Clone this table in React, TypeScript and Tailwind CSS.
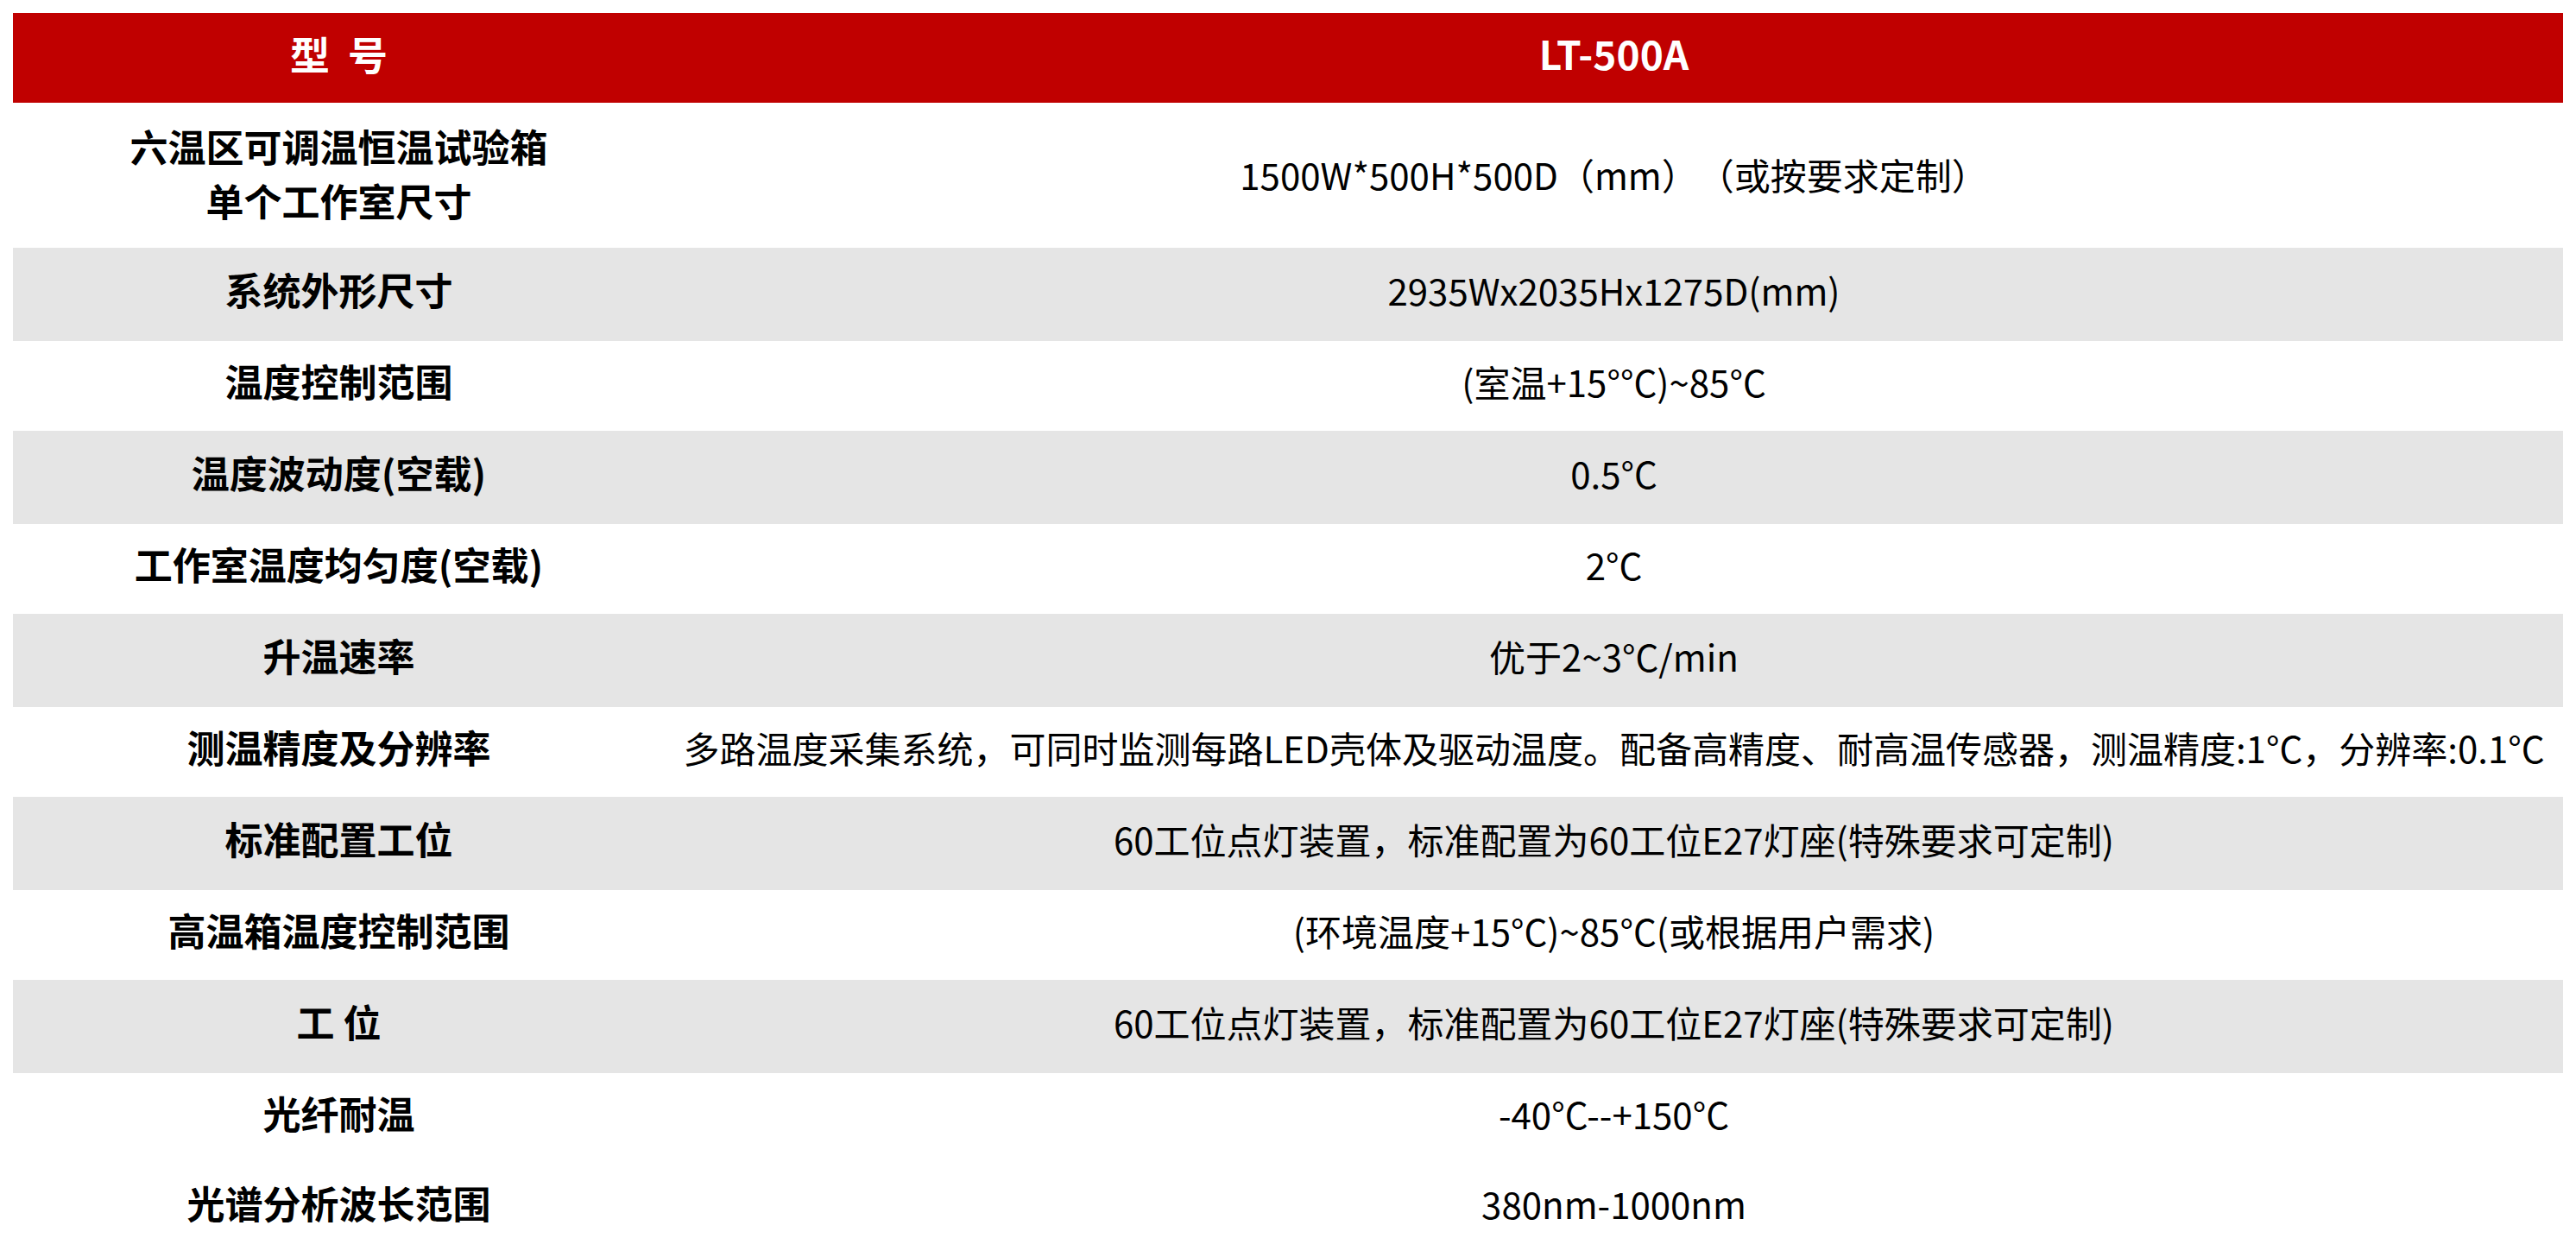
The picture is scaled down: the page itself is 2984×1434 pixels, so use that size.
import React from 'react';

type Row = {
    label: string[];
    value: string;
    grey: boolean;
};

const rows: Row[] = [
    { label: ['六温区可调温恒温试验箱', '单个工作室尺寸'], value: '1500W*500H*500D（mm）（或按要求定制）', grey: false },
    { label: ['系统外形尺寸'], value: '2935Wx2035Hx1275D(mm)', grey: true },
    { label: ['温度控制范围'], value: '(室温+15°°C)~85°C', grey: false },
    { label: ['温度波动度(空载)'], value: '0.5°C', grey: true },
    { label: ['工作室温度均匀度(空载)'], value: '2°C', grey: false },
    { label: ['升温速率'], value: '优于2~3°C/min', grey: true },
    { label: ['测温精度及分辨率'], value: '多路温度采集系统，可同时监测每路LED壳体及驱动温度。配备高精度、耐高温传感器，测温精度:1°C，分辨率:0.1°C', grey: false },
    { label: ['标准配置工位'], value: '60工位点灯装置，标准配置为60工位E27灯座(特殊要求可定制)', grey: true },
    { label: ['高温箱温度控制范围'], value: '(环境温度+15°C)~85°C(或根据用户需求)', grey: false },
    { label: ['工 位'], value: '60工位点灯装置，标准配置为60工位E27灯座(特殊要求可定制)', grey: true },
    { label: ['光纤耐温'], value: '-40°C--+150°C', grey: false },
    { label: ['光谱分析波长范围'], value: '380nm-1000nm', grey: false },
];

const SpecRow: React.FC<{ row: Row; index: number }> = ({ row, index }) => {
    const first = index === 0;
    const height = first ? 'h-[168px]' : row.grey ? 'h-[108px]' : 'h-[104px]';
    const shift = first ? 'pb-[4px]' : 'pb-[11px]';
    return (
        <div className={`grid grid-cols-[755px_1fr] ${height} ${row.grey ? 'bg-[#e5e5e5]' : 'bg-white'}`}>
            <div className={`flex flex-col items-center justify-center ${shift} text-[44px] leading-[63px] font-bold text-black whitespace-pre`}>
                {row.label.map((line) => (
                    <span key={line}>{line}</span>
                ))}
            </div>
            <div className={`flex items-center justify-center ${shift} text-[42px] leading-[63px] text-black whitespace-nowrap [text-spacing-trim:space-all]`}>
                {row.value}
            </div>
        </div>
    );
};

export default function App() {
    return (
        <div className="min-h-screen bg-white p-[15px] font-['Noto_Sans_CJK_SC',sans-serif]">
            <div className="w-full">
                <div className="grid grid-cols-[755px_1fr] h-[104px] bg-[#c00000] text-white text-[46px] font-bold">
                    <div className="flex items-center justify-center pb-[11px] whitespace-pre">型  号</div>
                    <div className="flex items-center justify-center pb-[11px]">LT-500A</div>
                </div>
                {rows.map((row, i) => (
                    <SpecRow key={i} row={row} index={i} />
                ))}
            </div>
        </div>
    );
}
